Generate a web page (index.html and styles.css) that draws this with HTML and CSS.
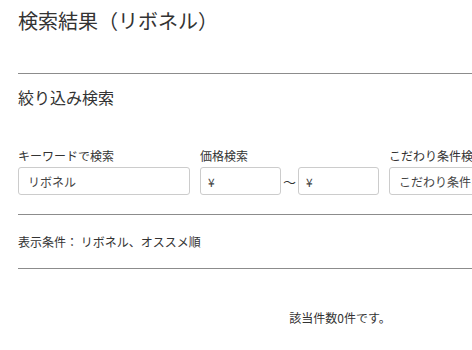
FILE: index.html
```html
<!DOCTYPE html>
<html lang="ja">
<head>
    <meta charset="UTF-8">
    <meta name="viewport" content="width=device-width, initial-scale=1.0">
    <title>検索結果（リボネル）</title>
    <link rel="stylesheet" href="styles.css">
</head>
<body>
    <div class="page">
        <h1 class="page-title">検索結果（リボネル）</h1>
        <hr class="rule rule-top">

        <h2 class="section-title">絞り込み検索</h2>
        <div class="filters">
            <div class="field field-keyword">
                <label class="field-label">キーワードで検索</label>
                <input class="text-box" type="text" value="リボネル">
            </div>
            <div class="field field-price">
                <label class="field-label">価格検索</label>
                <div class="price-range">
                    <input class="text-box price-box" type="text" value="¥">
                    <span class="tilde">～</span>
                    <input class="text-box price-box" type="text" value="¥">
                </div>
            </div>
            <div class="field field-extra">
                <label class="field-label">こだわり条件検索</label>
                <input class="text-box" type="text" value="こだわり条件を選択">
            </div>
        </div>
        <hr class="rule rule-mid">

        <p class="conditions">表示条件： リボネル、オススメ順</p>
        <hr class="rule rule-bottom">

        <p class="result-count">該当件数0件です。</p>
    </div>
</body>
</html>
```

FILE: styles.css
```css
html {
    overflow: hidden;
}

body {
    margin: 0;
    font-family: "Noto Sans CJK JP", "Noto Sans", sans-serif;
    color: #333;
    background: #fff;
}

.page {
    width: 644px;
    padding: 0 18px;
}

.page-title {
    font-size: 20px;
    font-weight: normal;
    line-height: 28px;
    margin: 0;
    padding-top: 7px;
}

.rule {
    border: 0;
    border-top: 1px solid #8c8c8c;
    margin: 0;
}

.rule-top {
    margin-top: 38px;
}

.section-title {
    font-size: 16px;
    font-weight: normal;
    line-height: 24px;
    margin: 11px 0 0;
}

.filters {
    display: flex;
    gap: 10px;
    margin-top: 38px;
}

.field {
    display: flex;
    flex-direction: column;
}

.field-label {
    font-size: 12px;
    line-height: 18px;
    margin-bottom: 2px;
}

.text-box {
    box-sizing: border-box;
    height: 28px;
    border: 1px solid #ccc;
    border-radius: 3px;
    padding: 0 9px;
    font-family: inherit;
    font-size: 12px;
    color: #444;
    background: #fff;
}

.field-keyword .text-box {
    width: 172px;
}

.price-range {
    display: flex;
    align-items: center;
}

.price-box {
    width: 81px;
    padding: 0 7px;
}

.tilde {
    width: 17px;
    text-align: center;
    font-size: 13px;
}

.field-extra .text-box {
    width: 200px;
}

.rule-mid {
    margin-top: 19px;
}

.conditions {
    font-size: 12px;
    line-height: 18px;
    margin: 18px 0 17px;
}

.result-count {
    font-size: 12px;
    line-height: 18px;
    text-align: center;
    margin: 40px 0 0;
}
```
